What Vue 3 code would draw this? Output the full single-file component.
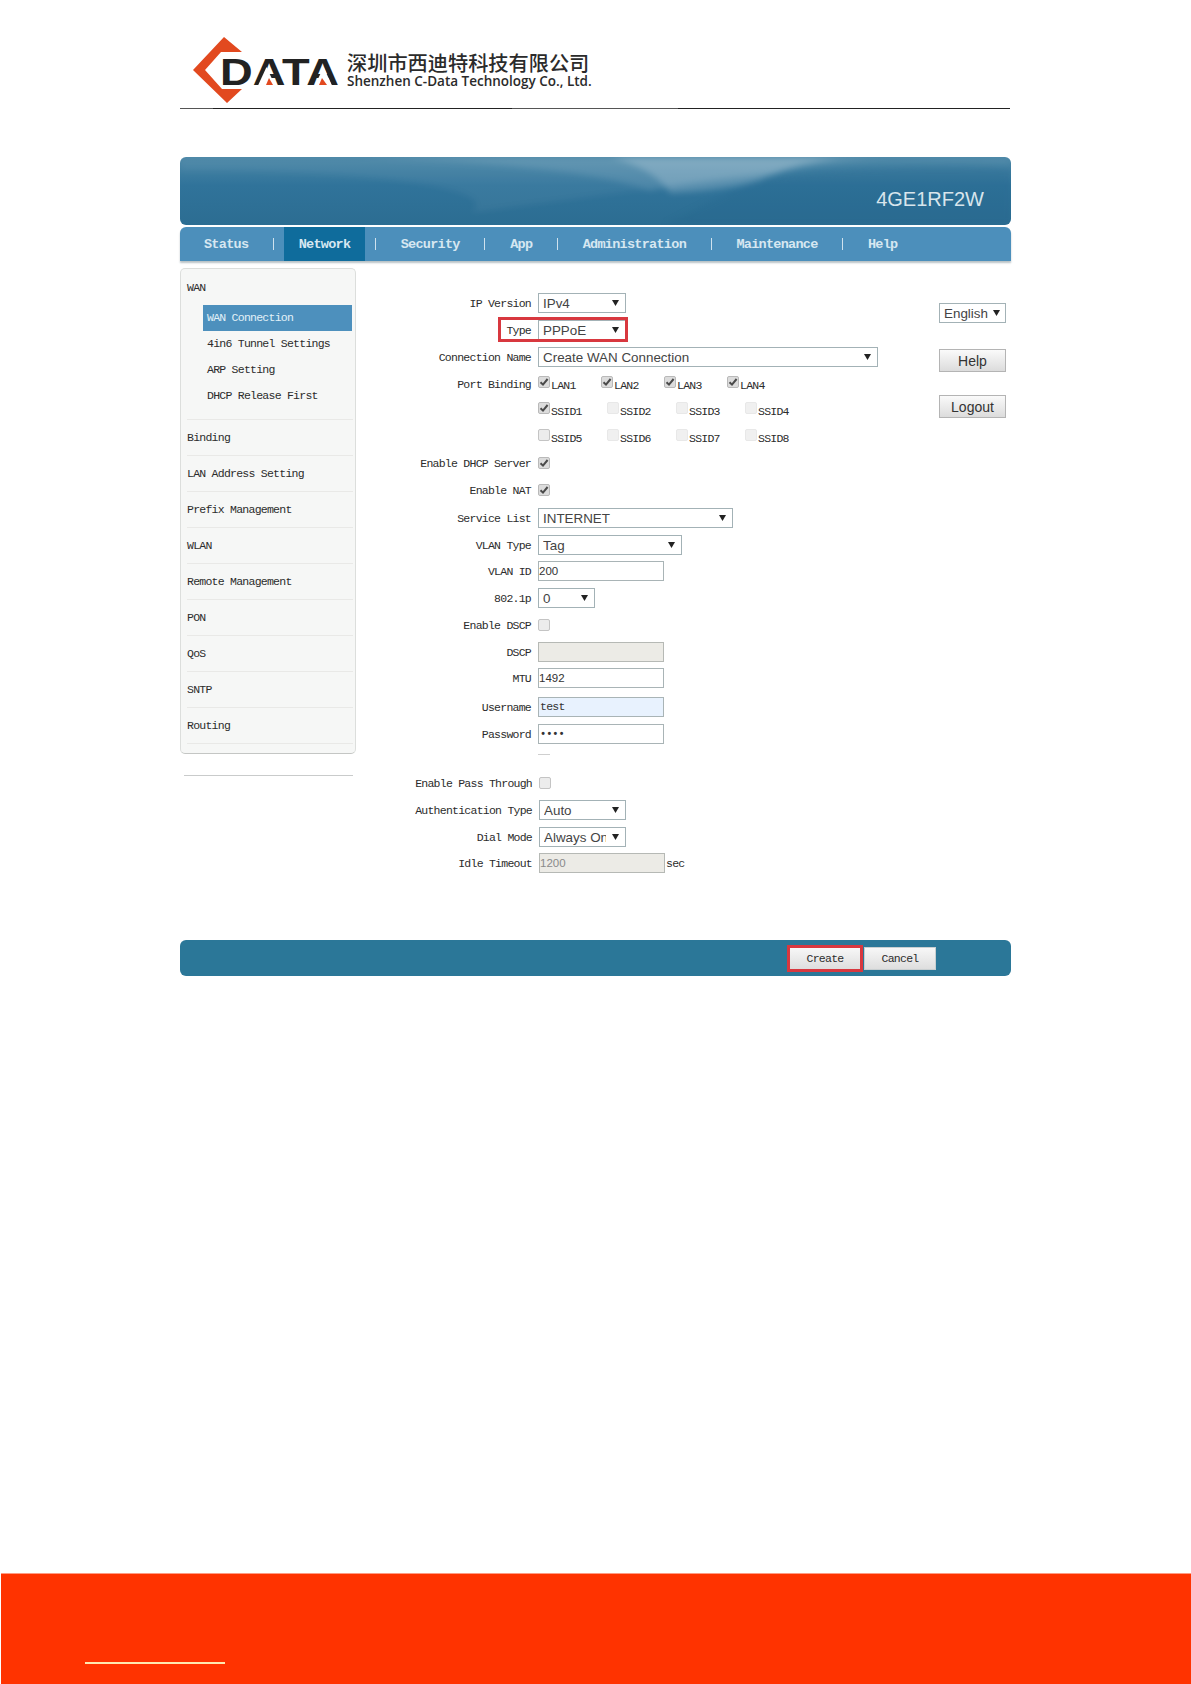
<script setup>
const navItems = ['Status', 'Network', 'Security', 'App', 'Administration', 'Maintenance', 'Help']
const subItems = ['WAN Connection', '4in6 Tunnel Settings', 'ARP Setting', 'DHCP Release First']
const sideItems = ['Binding', 'LAN Address Setting', 'Prefix Management', 'WLAN', 'Remote Management', 'PON', 'QoS', 'SNTP', 'Routing']

const rows = [
  { label: 'IP Version', kind: 'select', value: 'IPv4', width: 88, height: 27 },
  { label: 'Type', kind: 'select', value: 'PPPoE', width: 88, height: 27, marked: true },
  { label: 'Connection Name', kind: 'select', value: 'Create WAN Connection', width: 340, height: 26.5 },
  { label: 'Port Binding', kind: 'ports', step: 63, height: 26.5, ports: [['LAN1', 1], ['LAN2', 1], ['LAN3', 1], ['LAN4', 1]] },
  { label: '', kind: 'ports', step: 69, height: 26.5, ports: [['SSID1', 1], ['SSID2', 2], ['SSID3', 2], ['SSID4', 2]] },
  { label: '', kind: 'ports', step: 69, height: 26.5, ports: [['SSID5', 0], ['SSID6', 2], ['SSID7', 2], ['SSID8', 2]] },
  { label: 'Enable DHCP Server', kind: 'check', checked: true, height: 27 },
  { label: 'Enable NAT', kind: 'check', checked: true, height: 28 },
  { label: 'Service List', kind: 'select', value: 'INTERNET', width: 195, height: 27 },
  { label: 'VLAN Type', kind: 'select', value: 'Tag', width: 144, height: 26 },
  { label: 'VLAN ID', kind: 'input', value: '200', width: 126, height: 27 },
  { label: '802.1p', kind: 'select', value: '0', width: 57, height: 27 },
  { label: 'Enable DSCP', kind: 'check', checked: false, height: 27 },
  { label: 'DSCP', kind: 'input', value: '', width: 126, tone: 'off', height: 26 },
  { label: 'MTU', kind: 'input', value: '1492', width: 126, height: 29 },
  { label: 'Username', kind: 'input', value: 'test', width: 126, tone: 'fill', height: 27 },
  { label: 'Password', kind: 'input', value: '••••', width: 126, tone: 'mono', height: 27 },
  { label: '', kind: 'dash', height: 22 },
  { label: 'Enable Pass Through', kind: 'check', checked: false, height: 27, shift: true },
  { label: 'Authentication Type', kind: 'select', value: 'Auto', width: 87, height: 27, shift: true },
  { label: 'Dial Mode', kind: 'select', value: 'Always On', width: 87, height: 26, shift: true },
  { label: 'Idle Timeout', kind: 'input', value: '1200', width: 126, tone: 'off', unit: 'sec', height: 27, shift: true },
]
</script>

<template>
  <div class="page">
    <header class="letterhead">
      <svg class="logo" viewBox="0 0 162 78" width="162" height="78">
        <polygon points="8,40 39,7 57,22 36,22 20,40 37,59 57,59 42,73" fill="#e2491f" />
        <text x="35" y="55" font-family="Liberation Sans" font-weight="700" font-size="37.5" textLength="119" lengthAdjust="spacingAndGlyphs" fill="#222">DATA</text>
        <polygon points="81.5,37 90,55.5 73,55.5" fill="#fff" />
        <polygon points="138.5,37 147,55.5 130,55.5" fill="#fff" />
        <polygon points="81,55 84,48 88,55" fill="#e2491f" />
        <polygon points="134,55 137,48 142,55" fill="#e2491f" />
      </svg>
      <div class="company">
        <div class="company-cn">深圳市西迪特科技有限公司</div>
        <div class="company-en">Shenzhen C-Data Technology Co., Ltd.</div>
      </div>
    </header>
    <div class="rule"></div>

    <section class="console">
      <div class="banner">
        <svg class="swoosh" viewBox="0 0 831 68" preserveAspectRatio="none">
          <path d="M0 0H831V8C700 4 640 6 594 16C500 28 390 42 289 56C330 34 200 12 0 14Z" fill="#fff" opacity=".05" />
          <path d="M180 0H700C640 6 610 12 594 16C540 22 510 26 470 34C420 14 300 4 180 0Z" fill="#fff" opacity=".1" />
          <path d="M430 0H660C620 6 600 14 578 24C550 32 520 34 490 36C480 20 460 8 430 0Z" fill="#fff" opacity=".2" />
          <path d="M485 68C520 50 550 34 578 23C640 12 740 8 831 12V68Z" fill="#1d5f86" opacity=".2" />
        </svg>
        <span class="model">4GE1RF2W</span>
      </div>

      <nav class="nav">
        <template v-for="(item, i) in navItems" :key="item">
          <span v-if="i" class="nav-sep"></span>
          <span class="nav-item" :class="{ active: item === 'Network' }">{{ item }}</span>
        </template>
      </nav>

      <div class="main">
        <aside class="side-col">
          <div class="sidebar">
            <div class="side-group">
              <div class="side-head">WAN</div>
              <div v-for="(sub, i) in subItems" :key="sub" class="sub-item" :class="{ current: i === 0 }">{{ sub }}</div>
            </div>
            <div v-for="item in sideItems" :key="item" class="side-item">{{ item }}</div>
          </div>
          <div class="side-rule"></div>
        </aside>

        <form class="form" @submit.prevent>
          <div v-for="(row, i) in rows" :key="i" class="row" :class="{ shift: row.shift }" :style="{ height: row.height + 'px' }">
            <label class="label">{{ row.label }}</label>

            <div v-if="row.kind === 'select'" class="select" :style="{ width: row.width + 'px' }">
              <span class="select-text">{{ row.value }}</span>
              <svg class="arrow" viewBox="0 0 7 6" width="7" height="6"><polygon points="0,0 7,0 3.5,6" fill="#222" /></svg>
            </div>

            <div v-else-if="row.kind === 'input'" class="input-wrap">
              <div class="input" :class="row.tone" :style="{ width: row.width + 'px' }">{{ row.value }}</div>
              <span v-if="row.unit" class="unit">{{ row.unit }}</span>
            </div>

            <div v-else-if="row.kind === 'check'" class="check-cell">
              <span class="box" :class="{ on: row.checked }">
                <svg v-if="row.checked" viewBox="0 0 12 12" width="12" height="12"><path d="M2.5 6.2 5 8.6 9.6 3" fill="none" stroke="#4a4a4a" stroke-width="2" /></svg>
              </span>
            </div>

            <div v-else-if="row.kind === 'ports'" class="ports">
              <div v-for="p in row.ports" :key="p[0]" class="port" :style="{ width: row.step + 'px' }">
                <span class="box" :class="{ on: p[1] === 1, dim: p[1] === 2 }">
                  <svg v-if="p[1] === 1" viewBox="0 0 12 12" width="12" height="12"><path d="M2.5 6.2 5 8.6 9.6 3" fill="none" stroke="#4a4a4a" stroke-width="2" /></svg>
                </span>
                <span class="port-name">{{ p[0] }}</span>
              </div>
            </div>

            <div v-else class="dash"></div>

            <div v-if="row.marked" class="mark"></div>
          </div>
        </form>

        <div class="tools">
          <div class="select lang">
            <span class="select-text">English</span>
            <svg class="arrow" viewBox="0 0 7 6" width="7" height="6"><polygon points="0,0 7,0 3.5,6" fill="#222" /></svg>
          </div>
          <button type="button" class="tool-btn">Help</button>
          <button type="button" class="tool-btn">Logout</button>
        </div>
      </div>

      <div class="actions">
        <button type="button" class="act create">Create</button>
        <button type="button" class="act">Cancel</button>
      </div>
    </section>

    <footer class="footer">
      <div class="footer-line"></div>
    </footer>
  </div>
</template>

<style>
html, body { margin: 0; background: #fff; }
</style>

<style scoped>
.page {
  width: 1191px;
  min-height: 1684px;
  display: flex;
  flex-direction: column;
  font-family: "Liberation Mono", monospace;
  background: #fff;
  overflow: hidden;
}
.letterhead {
  display: flex;
  align-items: flex-start;
  height: 78px;
  padding: 30px 0 0 185px;
}
.logo { flex: none; }
.company { margin-top: 22px; color: #2b2b2b; }
.company-cn {
  font-family: "Noto Sans CJK SC", sans-serif;
  font-weight: 500;
  font-size: 20.2px;
  line-height: 22px;
  white-space: nowrap;
}
.company-en {
  font-family: "Open Sans", sans-serif;
  font-weight: 600;
  font-size: 13.5px;
  line-height: 15px;
  white-space: nowrap;
}
.rule {
  width: 830px;
  height: 1px;
  margin-left: 180px;
  background: linear-gradient(90deg, #555 0 4%, #222 4% 40%, #555 40% 60%, #222 60% 100%);
}
.console {
  width: 831px;
  margin: 48px 0 0 180px;
}
.banner {
  position: relative;
  height: 68px;
  border-radius: 6px;
  overflow: hidden;
  background: linear-gradient(180deg, #4a86a6 0%, #30739a 42%, #2c6d92 100%);
  display: flex;
  align-items: flex-end;
  justify-content: flex-end;
}
.swoosh {
  position: absolute;
  left: 0;
  top: 0;
  width: 100%;
  height: 100%;
  filter: blur(3px);
}
.model {
  position: relative;
  font-family: "Liberation Sans", sans-serif;
  font-size: 20px;
  line-height: 24px;
  color: #d8e5ec;
  margin: 0 27px 14px 0;
}
.nav {
  display: flex;
  align-items: center;
  height: 34px;
  margin-top: 2px;
  padding-left: 9.3px;
  background: #4c8fbb;
  border-radius: 6px 6px 0 0;
  box-shadow: 0 2px 2px #b9c2c6;
}
.nav-item {
  display: flex;
  align-items: center;
  height: 100%;
  padding: 0 14.7px;
  font-weight: 700;
  font-size: 13.5px;
  letter-spacing: -0.72px;
  color: #d6e7f1;
  white-space: nowrap;
}
.nav-item.active { background: #0f6c9c; }
.nav-sep {
  width: 1px;
  height: 12px;
  margin: 0 10px;
  background: #cfe2ee;
}
.main {
  display: flex;
  height: 672px;
  margin-top: 7px;
}
.side-col { width: 176px; flex: none; }
.sidebar {
  box-sizing: border-box;
  height: 486px;
  background: #f6f7f6;
  border: 1px solid #dcdedc;
  border-bottom-color: #c4c6c4;
  border-radius: 5px;
  color: #2c2c2c;
  font-size: 11.5px;
  letter-spacing: -0.75px;
}
.side-group {
  height: 151px;
  box-sizing: border-box;
  padding-top: 9px;
  margin-right: 2px;
  border-bottom: 1px solid #e9e9e7;
  margin-left: 6px;
}
.side-head { height: 27px; line-height: 20px; }
.sub-item {
  width: 149px;
  height: 26px;
  line-height: 25px;
  margin-left: 16px;
  padding-left: 4px;
  box-sizing: border-box;
  white-space: nowrap;
}
.sub-item.current { background: #4d90bd; color: #e2f0f8; }
.side-item {
  box-sizing: border-box;
  height: 36px;
  line-height: 35px;
  margin: 0 2px 0 6px;
  border-bottom: 1px solid #e9e9e7;
  white-space: nowrap;
}
.side-rule {
  height: 1px;
  margin: 21px 3px 0 4px;
  background: #c9cbcb;
}
.form {
  flex: 1;
  padding-top: 25px;
  color: #2c2c2c;
  font-size: 11.5px;
  letter-spacing: -0.75px;
}
.row {
  position: relative;
  display: flex;
  align-items: flex-start;
}
.row.shift { padding-left: 1px; }
.label {
  width: 175px;
  margin-right: 7px;
  flex: none;
  text-align: right;
  line-height: 22px;
  white-space: nowrap;
}
.select {
  box-sizing: border-box;
  height: 20px;
  display: flex;
  align-items: center;
  padding: 0 6px 0 4px;
  border: 1px solid #a3b2b6;
  background: #fff;
  font-family: "Liberation Sans", sans-serif;
  font-size: 13.4px;
  letter-spacing: 0;
  color: #444;
}
.select-text {
  flex: 1;
  min-width: 0;
  overflow: hidden;
  white-space: nowrap;
}
.arrow { flex: none; margin-left: 6px; }
.input-wrap { display: flex; align-items: flex-end; }
.input {
  box-sizing: border-box;
  height: 20px;
  padding: 0;
  border: 1px solid #a9b4b6;
  background: #fff;
  font-family: "Liberation Sans", sans-serif;
  font-size: 11.5px;
  letter-spacing: 0;
  line-height: 18px;
  color: #333;
}
.input.off { background: #ecebe6; color: #8a8a8a; border-color: #b6b9b5; }
.input.fill { background: #e8f2fe; font-family: "Liberation Mono", monospace; letter-spacing: -0.75px; padding-left: 1px; }
.input.mono { font-family: "Liberation Mono", monospace; font-size: 10.3px; font-weight: 700; padding-left: 1px; }
.unit { margin-left: 1px; line-height: 19px; }
.check-cell { padding-top: 4px; display: flex; }
.box {
  box-sizing: border-box;
  width: 12px;
  height: 12px;
  flex: none;
  border: 1px solid #c4c4c4;
  border-radius: 2px;
  background: #ececec;
  display: block;
}
.box svg { display: block; margin: -1px; }
.box.on { background: #dcdcdc; border-color: #b9b9b9; }
.box.dim { background: #f0f0f0; border-color: #e8e8e8; }
.ports { display: flex; padding-top: 2px; }
.port { display: flex; align-items: flex-start; flex: none; }
.port-name { margin: 3px 0 0 1px; line-height: 13px; }
.dash {
  width: 12px;
  height: 1px;
  margin-top: 3px;
  background: #cfcfcf;
}
.mark {
  position: absolute;
  left: 142px;
  top: -3px;
  box-sizing: border-box;
  width: 130px;
  height: 25px;
  border: 3px solid #d8383f;
}
.tools {
  width: 67px;
  margin-right: 5px;
  flex: none;
  padding-top: 35px;
  display: flex;
  flex-direction: column;
}
.lang { padding: 0 5px 0 4px; }
.lang .arrow { margin-left: 5px; }
.tool-btn {
  box-sizing: border-box;
  width: 67px;
  height: 23px;
  margin-top: 23px;
  padding: 0;
  border: 1px solid #b4b4b4;
  background: linear-gradient(180deg, #fafafa, #dcdcdc);
  font-family: "Liberation Sans", sans-serif;
  font-size: 14px;
  color: #333;
}
.lang + .tool-btn { margin-top: 26px; }
.actions {
  box-sizing: border-box;
  height: 36px;
  margin-top: 0;
  padding-right: 75px;
  display: flex;
  justify-content: flex-end;
  align-items: center;
  gap: 1px;
  background: #2b7798;
  border-radius: 6px;
}
.act {
  box-sizing: border-box;
  width: 72px;
  height: 23px;
  padding: 0;
  border: 1px solid #c9cfd1;
  background: linear-gradient(180deg, #f7f7f7, #dedede);
  font-family: "Liberation Mono", monospace;
  font-size: 11.5px;
  letter-spacing: -0.75px;
  color: #2c2c2c;
}
.act.create {
  width: 76px;
  height: 27px;
  border: 3px solid #d8383f;
}
.footer {
  box-sizing: border-box;
  height: 111px;
  margin: auto 0 0 1px;
  padding: 88px 0 0 84px;
  background: #ff3300;
  border-top: 1px solid #ff9b82;
}
.footer-line {
  width: 140px;
  height: 2px;
  background: #ffe9b0;
}
</style>
